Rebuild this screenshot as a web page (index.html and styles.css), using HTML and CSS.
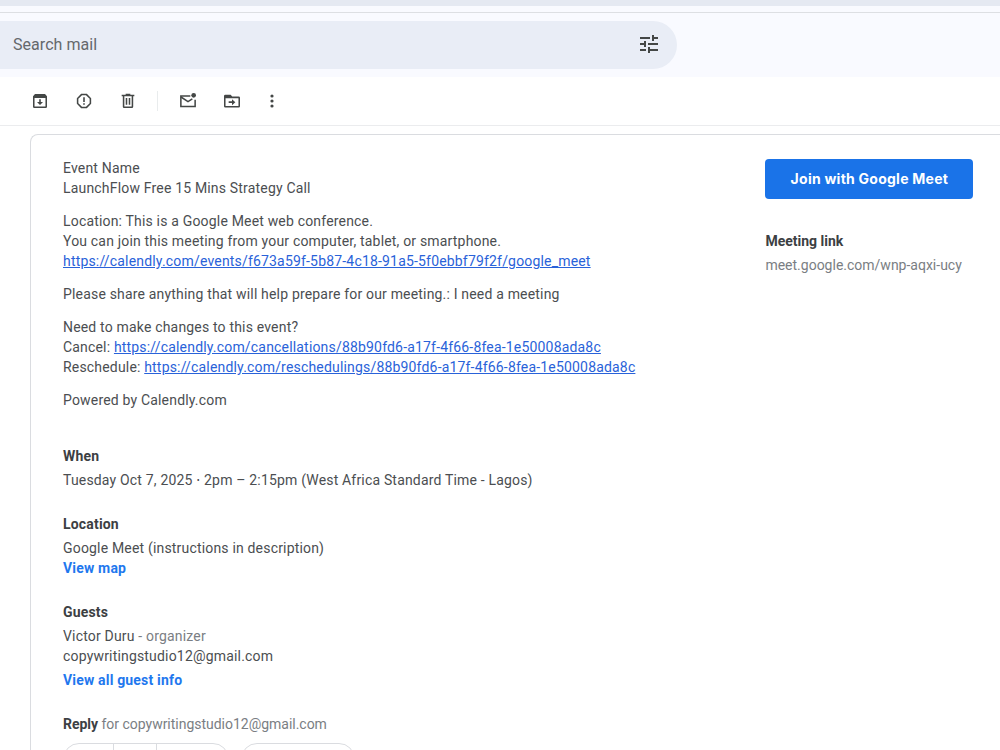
FILE: index.html
```html
<!DOCTYPE html>
<html lang="en">
<head>
  <meta charset="UTF-8">
  <title>Mail</title>
  <meta name="viewport" content="width=device-width, initial-scale=1.0">
  <link rel="stylesheet" href="styles.css">
</head>
<body>

<div class="browser-strip"></div>

<header class="header">
  <div class="search">
    <span class="search-text">Search mail</span>
    <svg class="tune" viewBox="0 0 24 24"><path d="M3 17v2h6v-2H3zM3 5v2h10V5H3zm10 16v-2h8v-2h-8v-2h-2v6h2zM7 9v2H3v2h4v2h2V9H7zm14 4v-2H11v2h10zm-6-4h2V7h4V5h-4V3h-2v6z"/></svg>
  </div>
</header>

<nav class="toolbar">
  <svg class="icon" viewBox="0 0 24 24"><path fill-rule="evenodd" d="M4.500 1.500h15l3 3.300V20.500a2 2 0 0 1-2 2h-17a2 2 0 0 1-2-2V4.800zM3.800 7.500v12.700h16.400V7.500z"/><path d="M10.800 9.500h2.400v4h3.300L12 18l-4.500-4.500h3.300z"/></svg>
  <svg class="icon" viewBox="0 0 24 24"><path class="line" d="M8.200 2.400h7.600l5.800 5.800v7.600l-5.800 5.800H8.200l-5.800-5.800V8.200z"/><path d="M10.800 6.500h2.400v7h-2.400zM10.800 15.200h2.400v2.300h-2.400z"/></svg>
  <svg class="icon" viewBox="0 0 24 24"><path fill-rule="evenodd" d="M8.500 1.200h7v1.300h6v2.400h-1.700V20.500a2 2 0 0 1-2 2H6.200a2 2 0 0 1-2-2V4.900H2.500V2.500h6zM6.500 4.900v15.300h11V4.900z"/><path d="M8.600 7.500h2.300v10.200H8.600zM13.100 7.500h2.300v10.200h-2.300z"/></svg>
  <span class="separator"></span>
  <svg class="icon mail" viewBox="0 0 24 24"><path class="line" d="M15.500 4.600H1.300v15.800h21.400V10"/><path class="line" d="M1.500 6l10.500 6.800 6.500-4"/><circle cx="20.500" cy="3.500" r="3.500"/></svg>
  <svg class="icon folder" viewBox="0 0 24 24"><path fill-rule="evenodd" d="M2 2.500h8l2.300 2.700H22a2 2 0 0 1 2 2v12.500a2 2 0 0 1-2 2H2a2 2 0 0 1-2-2V4.500a2 2 0 0 1 2-2zM2.300 8v11.400h19.400V8z"/><path d="M7 12.400h5V9.200l5 4.500-5 4.500V15H7z"/></svg>
  <svg class="icon more" viewBox="0 0 24 24"><circle cx="12" cy="4.500" r="2.400"/><circle cx="12" cy="12" r="2.400"/><circle cx="12" cy="19.500" r="2.400"/></svg>
</nav>

<main class="card">
  <div class="details">
    <div class="description">
      <p>Event Name<br>LaunchFlow Free 15 Mins Strategy Call</p>
      <p>Location: This is a Google Meet web conference.<br>You can join this meeting from your computer, tablet, or smartphone.<br><a href="#">https://calendly.com/events/f673a59f-5b87-4c18-91a5-5f0ebbf79f2f/google_meet</a></p>
      <p>Please share anything that will help prepare for our meeting.: I need a meeting</p>
      <p>Need to make changes to this event?<br>Cancel: <a href="#">https://calendly.com/cancellations/88b90fd6-a17f-4f66-8fea-1e50008ada8c</a><br>Reschedule: <a href="#">https://calendly.com/reschedulings/88b90fd6-a17f-4f66-8fea-1e50008ada8c</a></p>
      <p>Powered by Calendly.com</p>
    </div>

    <section>
      <h2>When</h2>
      <div>Tuesday Oct 7, 2025 ⋅ 2pm – 2:15pm (West Africa Standard Time - Lagos)</div>
    </section>

    <section>
      <h2>Location</h2>
      <div>Google Meet (instructions in description)</div>
      <a class="action" href="#">View map</a>
    </section>

    <section>
      <h2>Guests</h2>
      <div>Victor Duru <span class="muted">- organizer</span></div>
      <div>copywritingstudio12@gmail.com</div>
      <a class="action guest-info" href="#">View all guest info</a>
    </section>

    <div class="reply"><b>Reply</b> <span class="muted">for copywritingstudio12@gmail.com</span></div>
    <div class="reply-buttons">
      <div class="pill answers"><span class="yes"></span><span class="no"></span><span></span></div>
      <div class="pill more-options"></div>
    </div>
  </div>

  <aside class="meet">
    <a class="join" href="#">Join with Google Meet</a>
    <h2>Meeting link</h2>
    <div class="muted">meet.google.com/wnp-aqxi-ucy</div>
  </aside>
</main>

</body>
</html>
```
FILE: styles.css
```css
* {
  box-sizing: border-box;
}
body {
  margin: 0;
  height: 750px;
  overflow: hidden;
  background-color: #fff;
  color: #4b4e51;
  font-family: Roboto, "Liberation Sans", sans-serif;
  font-size: 14px;
  line-height: 20px;
}
.browser-strip {
  height: 6px;
  background-color: #e5e9f2;
}
.header {
  height: 71px;
  padding-top: 8px;
  background: linear-gradient(#dddfe3, #dddfe3) 0 6px / 100% 1px no-repeat #f9faff;
}
.search {
  display: flex;
  align-items: center;
  justify-content: space-between;
  width: 677px;
  height: 48px;
  margin-top: 7px;
  padding: 0 16px 2px 13px;
  border-radius: 0 24px 24px 0;
  background-color: #e9edf6;
}
.search-text {
  padding-top: 2px;
  color: #65686c;
  font-size: 16px;
  letter-spacing: 0.05px;
}
.tune {
  width: 24px;
  height: 24px;
  fill: #444746;
}
.toolbar {
  display: flex;
  align-items: center;
  height: 49px;
  padding-left: 32px;
  border-bottom: 1px solid #ebecee;
}
.icon {
  width: 16px;
  height: 16px;
  margin-right: 28px;
  fill: #444746;
}
.icon .line {
  fill: none;
  stroke: #444746;
  stroke-width: 2.3;
}
.separator {
  width: 1px;
  height: 20px;
  margin: 0 22px 0 -7px;
  background-color: #e9eced;
}
.mail {
  overflow: visible;
}
.folder {
  margin-right: 24px;
}
.more {
  margin-left: -0.5px;
}
.card {
  display: flex;
  height: 616px;
  margin: 8px 0 0 30px;
  padding: 23px 0 0 32px;
  border: 1px solid #dadce0;
  border-right: none;
  border-bottom: none;
  border-radius: 8px 0 0 0;
  overflow: hidden;
}
.details {
  width: 702.4px;
  letter-spacing: 0.18px;
}
.description {
  margin-bottom: 36px;
}
p {
  margin: 0 0 13px;
}
p a {
  color: #2962d9;
}
h2 {
  margin: 0 0 4px;
  color: #3c4043;
  font-size: 14px;
  font-weight: 700;
  line-height: 20px;
}
section {
  margin-bottom: 24px;
}
.action {
  display: block;
  color: #1f78ee;
  font-weight: 700;
  text-decoration: none;
}
.guest-info {
  margin-top: 4px;
}
.muted {
  color: #7a7e83;
}
.reply {
  letter-spacing: -0.02px;
}
.reply b {
  color: #3c4043;
}
.reply-buttons {
  display: flex;
  gap: 12px;
  height: 7px;
  margin-top: 9px;
  overflow: hidden;
}
.pill {
  display: flex;
  height: 32px;
  border: 1px solid #dadce0;
  border-radius: 16px;
}
.answers {
  width: 166px;
}
.yes {
  width: 50px;
  border-right: 1px solid #dadce0;
}
.no {
  width: 43px;
  border-right: 1px solid #dadce0;
}
.more-options {
  width: 114px;
}
.join {
  display: block;
  width: 208px;
  height: 40px;
  margin: 1px 0 32px;
  border-radius: 4px;
  background-color: #1a73e8;
  color: #fff;
  font-family: Inter, "Liberation Sans", sans-serif;
  font-weight: 700;
  letter-spacing: 0.25px;
  line-height: 40px;
  text-align: center;
  text-decoration: none;
}
```
